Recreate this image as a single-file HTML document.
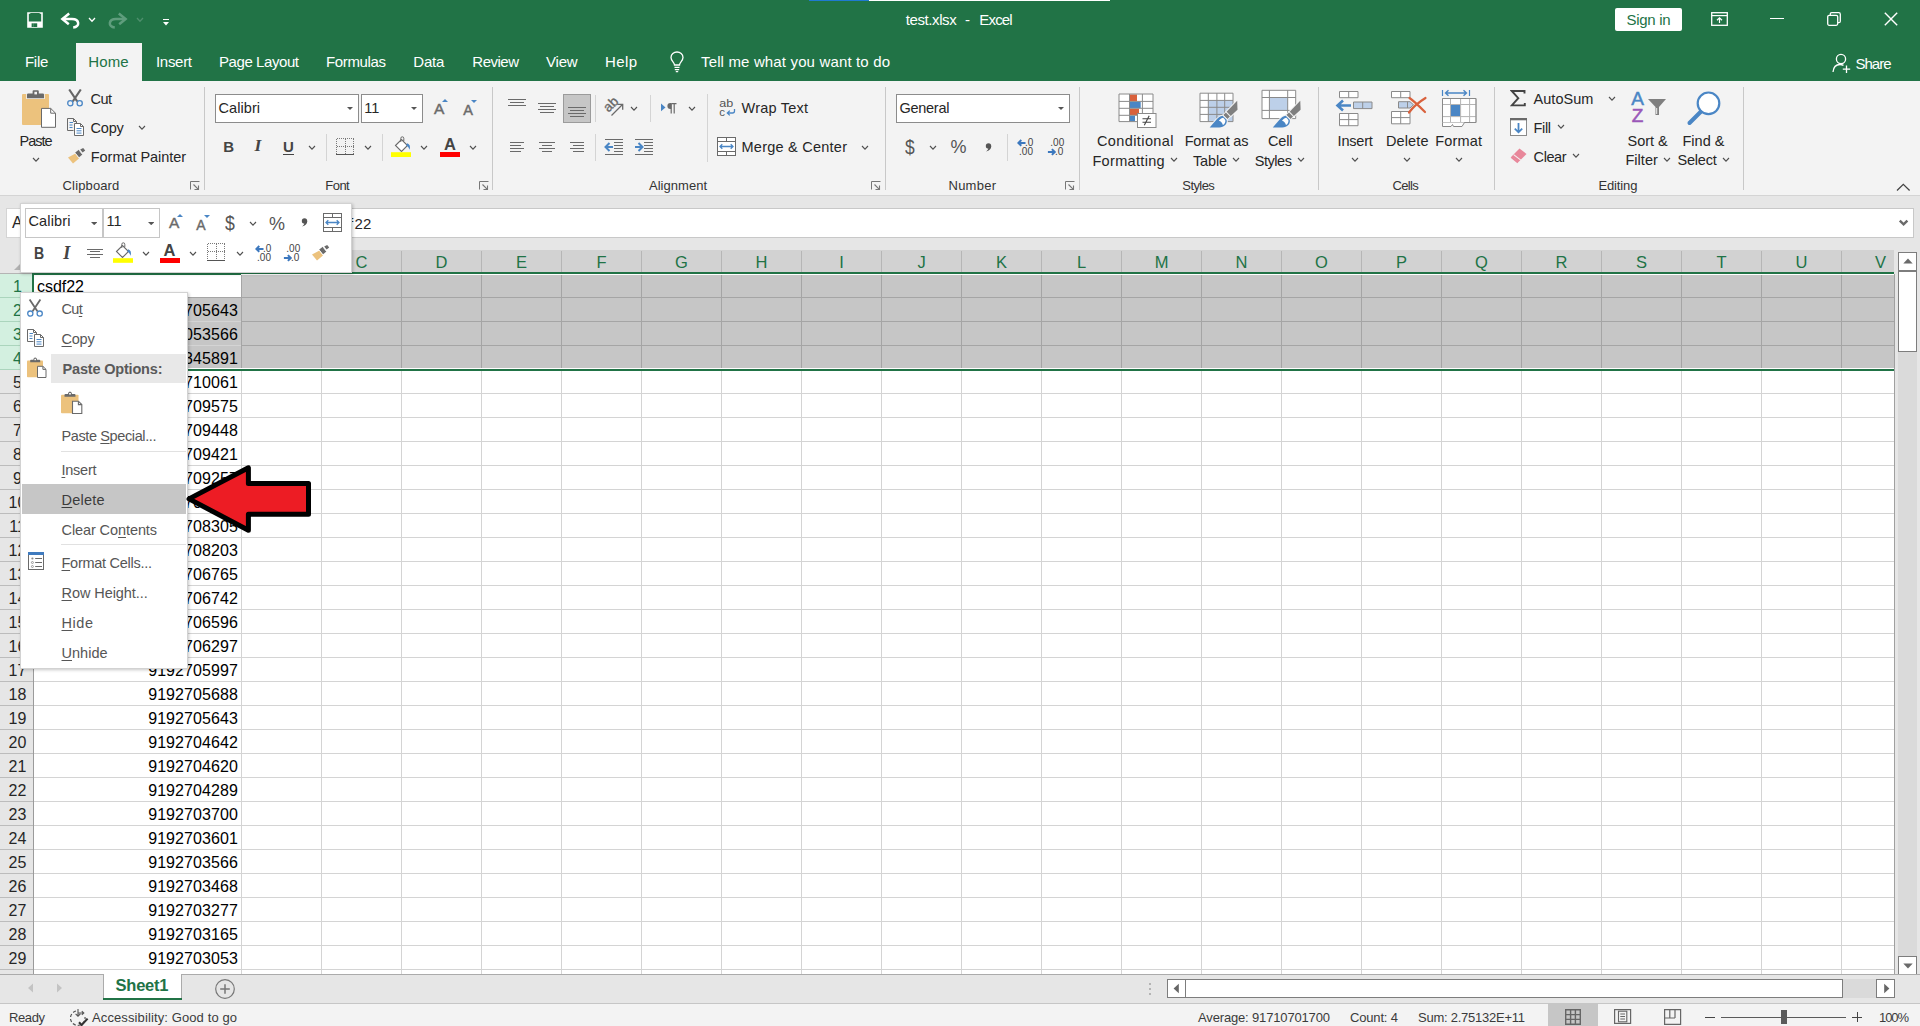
<!DOCTYPE html>
<html><head><meta charset="utf-8"><title>test.xlsx - Excel</title>
<style>
html,body{margin:0;padding:0;}
body{width:1920px;height:1026px;overflow:hidden;position:relative;background:#fff;font-family:"Liberation Sans",sans-serif;}
.r{position:absolute;}
.t{position:absolute;white-space:pre;}
u{text-decoration:underline;text-underline-offset:2px;text-decoration-thickness:1px;}
</style></head><body>
<div class="r" style="left:0px;top:196px;width:1920px;height:78px;background:#e6e6e6;"></div>
<div class="r" style="left:6px;top:208px;width:130px;height:30px;background:#fff;border:1px solid #d4d4d4;box-sizing:border-box;"></div>
<div class="t" style="left:12.00px;top:215.46px;font-size:16px;line-height:16px;color:#262626;">A</div>
<div class="r" style="left:340px;top:208px;width:1574px;height:30px;background:#fff;border:1px solid #c8c8c8;box-sizing:border-box;"></div>
<div class="t" style="left:348.90px;top:216.10px;font-size:15px;line-height:15px;color:#262626;">f</div>
<div class="t" style="left:354.60px;top:216.10px;font-size:15px;line-height:15px;color:#262626;">22</div>
<svg class="r" style="left:1897px;top:218px;" width="14" height="10" viewBox="0 0 14 10"><path d="M2.8 2.6 L6.6 6.4 L10.4 2.6" fill="none" stroke="#6a6a6a" stroke-width="2.4"/></svg>
<div class="r" style="left:0px;top:274px;width:1894px;height:700px;background:#fff;"></div>
<div class="r" style="left:0px;top:250px;width:1894px;height:22px;background:#d2d2d2;"></div>
<div class="r" style="left:0px;top:250px;width:34px;height:24px;background:#e6e6e6;"></div>
<svg class="r" style="left:14px;top:258px;" width="12" height="12" viewBox="0 0 12 12"><path d="M12 0 L12 12 L0 12 Z" fill="#b1b1b1"/></svg>
<div class="r" style="left:34px;top:275px;width:1860px;height:95px;background:#c6c6c6;"></div>
<div class="r" style="left:34px;top:275px;width:207px;height:22px;background:#fff;"></div>
<div class="r" style="left:0px;top:274px;width:33px;height:700px;background:#e6e6e6;"></div>
<div class="r" style="left:0px;top:274px;width:33px;height:96px;background:#d3f0e0;"></div>
<div class="r" style="left:241px;top:274px;width:1px;height:700px;background:#d4d4d4;"></div>
<div class="r" style="left:241px;top:275px;width:1px;height:95px;background:#a5a5a5;"></div>
<div class="r" style="left:241px;top:251px;width:1px;height:21px;background:#b6b6b6;"></div>
<div class="r" style="left:321px;top:274px;width:1px;height:700px;background:#d4d4d4;"></div>
<div class="r" style="left:321px;top:275px;width:1px;height:95px;background:#a5a5a5;"></div>
<div class="r" style="left:321px;top:251px;width:1px;height:21px;background:#b6b6b6;"></div>
<div class="r" style="left:401px;top:274px;width:1px;height:700px;background:#d4d4d4;"></div>
<div class="r" style="left:401px;top:275px;width:1px;height:95px;background:#a5a5a5;"></div>
<div class="r" style="left:401px;top:251px;width:1px;height:21px;background:#b6b6b6;"></div>
<div class="r" style="left:481px;top:274px;width:1px;height:700px;background:#d4d4d4;"></div>
<div class="r" style="left:481px;top:275px;width:1px;height:95px;background:#a5a5a5;"></div>
<div class="r" style="left:481px;top:251px;width:1px;height:21px;background:#b6b6b6;"></div>
<div class="r" style="left:561px;top:274px;width:1px;height:700px;background:#d4d4d4;"></div>
<div class="r" style="left:561px;top:275px;width:1px;height:95px;background:#a5a5a5;"></div>
<div class="r" style="left:561px;top:251px;width:1px;height:21px;background:#b6b6b6;"></div>
<div class="r" style="left:641px;top:274px;width:1px;height:700px;background:#d4d4d4;"></div>
<div class="r" style="left:641px;top:275px;width:1px;height:95px;background:#a5a5a5;"></div>
<div class="r" style="left:641px;top:251px;width:1px;height:21px;background:#b6b6b6;"></div>
<div class="r" style="left:721px;top:274px;width:1px;height:700px;background:#d4d4d4;"></div>
<div class="r" style="left:721px;top:275px;width:1px;height:95px;background:#a5a5a5;"></div>
<div class="r" style="left:721px;top:251px;width:1px;height:21px;background:#b6b6b6;"></div>
<div class="r" style="left:801px;top:274px;width:1px;height:700px;background:#d4d4d4;"></div>
<div class="r" style="left:801px;top:275px;width:1px;height:95px;background:#a5a5a5;"></div>
<div class="r" style="left:801px;top:251px;width:1px;height:21px;background:#b6b6b6;"></div>
<div class="r" style="left:881px;top:274px;width:1px;height:700px;background:#d4d4d4;"></div>
<div class="r" style="left:881px;top:275px;width:1px;height:95px;background:#a5a5a5;"></div>
<div class="r" style="left:881px;top:251px;width:1px;height:21px;background:#b6b6b6;"></div>
<div class="r" style="left:961px;top:274px;width:1px;height:700px;background:#d4d4d4;"></div>
<div class="r" style="left:961px;top:275px;width:1px;height:95px;background:#a5a5a5;"></div>
<div class="r" style="left:961px;top:251px;width:1px;height:21px;background:#b6b6b6;"></div>
<div class="r" style="left:1041px;top:274px;width:1px;height:700px;background:#d4d4d4;"></div>
<div class="r" style="left:1041px;top:275px;width:1px;height:95px;background:#a5a5a5;"></div>
<div class="r" style="left:1041px;top:251px;width:1px;height:21px;background:#b6b6b6;"></div>
<div class="r" style="left:1121px;top:274px;width:1px;height:700px;background:#d4d4d4;"></div>
<div class="r" style="left:1121px;top:275px;width:1px;height:95px;background:#a5a5a5;"></div>
<div class="r" style="left:1121px;top:251px;width:1px;height:21px;background:#b6b6b6;"></div>
<div class="r" style="left:1201px;top:274px;width:1px;height:700px;background:#d4d4d4;"></div>
<div class="r" style="left:1201px;top:275px;width:1px;height:95px;background:#a5a5a5;"></div>
<div class="r" style="left:1201px;top:251px;width:1px;height:21px;background:#b6b6b6;"></div>
<div class="r" style="left:1281px;top:274px;width:1px;height:700px;background:#d4d4d4;"></div>
<div class="r" style="left:1281px;top:275px;width:1px;height:95px;background:#a5a5a5;"></div>
<div class="r" style="left:1281px;top:251px;width:1px;height:21px;background:#b6b6b6;"></div>
<div class="r" style="left:1361px;top:274px;width:1px;height:700px;background:#d4d4d4;"></div>
<div class="r" style="left:1361px;top:275px;width:1px;height:95px;background:#a5a5a5;"></div>
<div class="r" style="left:1361px;top:251px;width:1px;height:21px;background:#b6b6b6;"></div>
<div class="r" style="left:1441px;top:274px;width:1px;height:700px;background:#d4d4d4;"></div>
<div class="r" style="left:1441px;top:275px;width:1px;height:95px;background:#a5a5a5;"></div>
<div class="r" style="left:1441px;top:251px;width:1px;height:21px;background:#b6b6b6;"></div>
<div class="r" style="left:1521px;top:274px;width:1px;height:700px;background:#d4d4d4;"></div>
<div class="r" style="left:1521px;top:275px;width:1px;height:95px;background:#a5a5a5;"></div>
<div class="r" style="left:1521px;top:251px;width:1px;height:21px;background:#b6b6b6;"></div>
<div class="r" style="left:1601px;top:274px;width:1px;height:700px;background:#d4d4d4;"></div>
<div class="r" style="left:1601px;top:275px;width:1px;height:95px;background:#a5a5a5;"></div>
<div class="r" style="left:1601px;top:251px;width:1px;height:21px;background:#b6b6b6;"></div>
<div class="r" style="left:1681px;top:274px;width:1px;height:700px;background:#d4d4d4;"></div>
<div class="r" style="left:1681px;top:275px;width:1px;height:95px;background:#a5a5a5;"></div>
<div class="r" style="left:1681px;top:251px;width:1px;height:21px;background:#b6b6b6;"></div>
<div class="r" style="left:1761px;top:274px;width:1px;height:700px;background:#d4d4d4;"></div>
<div class="r" style="left:1761px;top:275px;width:1px;height:95px;background:#a5a5a5;"></div>
<div class="r" style="left:1761px;top:251px;width:1px;height:21px;background:#b6b6b6;"></div>
<div class="r" style="left:1841px;top:274px;width:1px;height:700px;background:#d4d4d4;"></div>
<div class="r" style="left:1841px;top:275px;width:1px;height:95px;background:#a5a5a5;"></div>
<div class="r" style="left:1841px;top:251px;width:1px;height:21px;background:#b6b6b6;"></div>
<div class="r" style="left:34px;top:297px;width:1860px;height:1px;background:#d4d4d4;"></div>
<div class="r" style="left:0px;top:297px;width:33px;height:1px;background:#abd5bd;"></div>
<div class="r" style="left:34px;top:321px;width:1860px;height:1px;background:#d4d4d4;"></div>
<div class="r" style="left:0px;top:321px;width:33px;height:1px;background:#abd5bd;"></div>
<div class="r" style="left:34px;top:345px;width:1860px;height:1px;background:#d4d4d4;"></div>
<div class="r" style="left:0px;top:345px;width:33px;height:1px;background:#abd5bd;"></div>
<div class="r" style="left:34px;top:369px;width:1860px;height:1px;background:#d4d4d4;"></div>
<div class="r" style="left:0px;top:369px;width:33px;height:1px;background:#abd5bd;"></div>
<div class="r" style="left:34px;top:393px;width:1860px;height:1px;background:#d4d4d4;"></div>
<div class="r" style="left:0px;top:393px;width:33px;height:1px;background:#bcbcbc;"></div>
<div class="r" style="left:34px;top:417px;width:1860px;height:1px;background:#d4d4d4;"></div>
<div class="r" style="left:0px;top:417px;width:33px;height:1px;background:#bcbcbc;"></div>
<div class="r" style="left:34px;top:441px;width:1860px;height:1px;background:#d4d4d4;"></div>
<div class="r" style="left:0px;top:441px;width:33px;height:1px;background:#bcbcbc;"></div>
<div class="r" style="left:34px;top:465px;width:1860px;height:1px;background:#d4d4d4;"></div>
<div class="r" style="left:0px;top:465px;width:33px;height:1px;background:#bcbcbc;"></div>
<div class="r" style="left:34px;top:489px;width:1860px;height:1px;background:#d4d4d4;"></div>
<div class="r" style="left:0px;top:489px;width:33px;height:1px;background:#bcbcbc;"></div>
<div class="r" style="left:34px;top:513px;width:1860px;height:1px;background:#d4d4d4;"></div>
<div class="r" style="left:0px;top:513px;width:33px;height:1px;background:#bcbcbc;"></div>
<div class="r" style="left:34px;top:537px;width:1860px;height:1px;background:#d4d4d4;"></div>
<div class="r" style="left:0px;top:537px;width:33px;height:1px;background:#bcbcbc;"></div>
<div class="r" style="left:34px;top:561px;width:1860px;height:1px;background:#d4d4d4;"></div>
<div class="r" style="left:0px;top:561px;width:33px;height:1px;background:#bcbcbc;"></div>
<div class="r" style="left:34px;top:585px;width:1860px;height:1px;background:#d4d4d4;"></div>
<div class="r" style="left:0px;top:585px;width:33px;height:1px;background:#bcbcbc;"></div>
<div class="r" style="left:34px;top:609px;width:1860px;height:1px;background:#d4d4d4;"></div>
<div class="r" style="left:0px;top:609px;width:33px;height:1px;background:#bcbcbc;"></div>
<div class="r" style="left:34px;top:633px;width:1860px;height:1px;background:#d4d4d4;"></div>
<div class="r" style="left:0px;top:633px;width:33px;height:1px;background:#bcbcbc;"></div>
<div class="r" style="left:34px;top:657px;width:1860px;height:1px;background:#d4d4d4;"></div>
<div class="r" style="left:0px;top:657px;width:33px;height:1px;background:#bcbcbc;"></div>
<div class="r" style="left:34px;top:681px;width:1860px;height:1px;background:#d4d4d4;"></div>
<div class="r" style="left:0px;top:681px;width:33px;height:1px;background:#bcbcbc;"></div>
<div class="r" style="left:34px;top:705px;width:1860px;height:1px;background:#d4d4d4;"></div>
<div class="r" style="left:0px;top:705px;width:33px;height:1px;background:#bcbcbc;"></div>
<div class="r" style="left:34px;top:729px;width:1860px;height:1px;background:#d4d4d4;"></div>
<div class="r" style="left:0px;top:729px;width:33px;height:1px;background:#bcbcbc;"></div>
<div class="r" style="left:34px;top:753px;width:1860px;height:1px;background:#d4d4d4;"></div>
<div class="r" style="left:0px;top:753px;width:33px;height:1px;background:#bcbcbc;"></div>
<div class="r" style="left:34px;top:777px;width:1860px;height:1px;background:#d4d4d4;"></div>
<div class="r" style="left:0px;top:777px;width:33px;height:1px;background:#bcbcbc;"></div>
<div class="r" style="left:34px;top:801px;width:1860px;height:1px;background:#d4d4d4;"></div>
<div class="r" style="left:0px;top:801px;width:33px;height:1px;background:#bcbcbc;"></div>
<div class="r" style="left:34px;top:825px;width:1860px;height:1px;background:#d4d4d4;"></div>
<div class="r" style="left:0px;top:825px;width:33px;height:1px;background:#bcbcbc;"></div>
<div class="r" style="left:34px;top:849px;width:1860px;height:1px;background:#d4d4d4;"></div>
<div class="r" style="left:0px;top:849px;width:33px;height:1px;background:#bcbcbc;"></div>
<div class="r" style="left:34px;top:873px;width:1860px;height:1px;background:#d4d4d4;"></div>
<div class="r" style="left:0px;top:873px;width:33px;height:1px;background:#bcbcbc;"></div>
<div class="r" style="left:34px;top:897px;width:1860px;height:1px;background:#d4d4d4;"></div>
<div class="r" style="left:0px;top:897px;width:33px;height:1px;background:#bcbcbc;"></div>
<div class="r" style="left:34px;top:921px;width:1860px;height:1px;background:#d4d4d4;"></div>
<div class="r" style="left:0px;top:921px;width:33px;height:1px;background:#bcbcbc;"></div>
<div class="r" style="left:34px;top:945px;width:1860px;height:1px;background:#d4d4d4;"></div>
<div class="r" style="left:0px;top:945px;width:33px;height:1px;background:#bcbcbc;"></div>
<div class="r" style="left:34px;top:969px;width:1860px;height:1px;background:#d4d4d4;"></div>
<div class="r" style="left:0px;top:969px;width:33px;height:1px;background:#bcbcbc;"></div>
<div class="r" style="left:241px;top:297px;width:1653px;height:1px;background:#a5a5a5;"></div>
<div class="r" style="left:241px;top:321px;width:1653px;height:1px;background:#a5a5a5;"></div>
<div class="r" style="left:241px;top:345px;width:1653px;height:1px;background:#a5a5a5;"></div>
<div class="r" style="left:34px;top:297px;width:207px;height:1px;background:#a5a5a5;"></div>
<div class="r" style="left:33px;top:274px;width:1px;height:700px;background:#9b9b9b;"></div>
<div class="r" style="left:34px;top:272px;width:1860px;height:2px;background:#217346;"></div>
<div class="r" style="left:34px;top:274px;width:1860px;height:1px;background:#fff;"></div>
<div class="r" style="left:34px;top:368px;width:1860px;height:1px;background:#fff;"></div>
<div class="r" style="left:33px;top:369px;width:1861px;height:2px;background:#217346;"></div>
<div class="r" style="left:32px;top:273px;width:2px;height:97px;background:#217346;"></div>
<div class="r" style="left:0px;top:273px;width:32px;height:1px;background:#b4b4b4;"></div>
<div class="r" style="left:34px;top:274px;width:207px;height:1px;background:#217346;"></div>
<div class="t" style="left:355.54px;top:254.03px;font-size:16.5px;line-height:16.5px;color:#217346;">C</div>
<div class="t" style="left:435.54px;top:254.03px;font-size:16.5px;line-height:16.5px;color:#217346;">D</div>
<div class="t" style="left:516.00px;top:254.03px;font-size:16.5px;line-height:16.5px;color:#217346;">E</div>
<div class="t" style="left:596.46px;top:254.03px;font-size:16.5px;line-height:16.5px;color:#217346;">F</div>
<div class="t" style="left:675.08px;top:254.03px;font-size:16.5px;line-height:16.5px;color:#217346;">G</div>
<div class="t" style="left:755.54px;top:254.03px;font-size:16.5px;line-height:16.5px;color:#217346;">H</div>
<div class="t" style="left:839.21px;top:254.03px;font-size:16.5px;line-height:16.5px;color:#217346;">I</div>
<div class="t" style="left:917.38px;top:254.03px;font-size:16.5px;line-height:16.5px;color:#217346;">J</div>
<div class="t" style="left:996.00px;top:254.03px;font-size:16.5px;line-height:16.5px;color:#217346;">K</div>
<div class="t" style="left:1076.91px;top:254.03px;font-size:16.5px;line-height:16.5px;color:#217346;">L</div>
<div class="t" style="left:1154.63px;top:254.03px;font-size:16.5px;line-height:16.5px;color:#217346;">M</div>
<div class="t" style="left:1235.54px;top:254.03px;font-size:16.5px;line-height:16.5px;color:#217346;">N</div>
<div class="t" style="left:1315.08px;top:254.03px;font-size:16.5px;line-height:16.5px;color:#217346;">O</div>
<div class="t" style="left:1396.00px;top:254.03px;font-size:16.5px;line-height:16.5px;color:#217346;">P</div>
<div class="t" style="left:1475.08px;top:254.03px;font-size:16.5px;line-height:16.5px;color:#217346;">Q</div>
<div class="t" style="left:1555.54px;top:254.03px;font-size:16.5px;line-height:16.5px;color:#217346;">R</div>
<div class="t" style="left:1636.00px;top:254.03px;font-size:16.5px;line-height:16.5px;color:#217346;">S</div>
<div class="t" style="left:1716.46px;top:254.03px;font-size:16.5px;line-height:16.5px;color:#217346;">T</div>
<div class="t" style="left:1795.54px;top:254.03px;font-size:16.5px;line-height:16.5px;color:#217346;">U</div>
<div class="t" style="left:1875.00px;top:254.03px;font-size:16.5px;line-height:16.5px;color:#217346;">V</div>
<div class="t" style="left:13.05px;top:278.96px;font-size:16px;line-height:16px;color:#217346;">1</div>
<div class="t" style="left:13.05px;top:302.96px;font-size:16px;line-height:16px;color:#217346;">2</div>
<div class="t" style="left:13.05px;top:326.96px;font-size:16px;line-height:16px;color:#217346;">3</div>
<div class="t" style="left:13.05px;top:350.96px;font-size:16px;line-height:16px;color:#217346;">4</div>
<div class="t" style="left:13.05px;top:374.96px;font-size:16px;line-height:16px;color:#262626;">5</div>
<div class="t" style="left:13.05px;top:398.96px;font-size:16px;line-height:16px;color:#262626;">6</div>
<div class="t" style="left:13.05px;top:422.96px;font-size:16px;line-height:16px;color:#262626;">7</div>
<div class="t" style="left:13.05px;top:446.96px;font-size:16px;line-height:16px;color:#262626;">8</div>
<div class="t" style="left:13.05px;top:470.96px;font-size:16px;line-height:16px;color:#262626;">9</div>
<div class="t" style="left:8.60px;top:494.96px;font-size:16px;line-height:16px;color:#262626;">10</div>
<div class="t" style="left:9.20px;top:518.96px;font-size:16px;line-height:16px;color:#262626;">11</div>
<div class="t" style="left:8.60px;top:542.96px;font-size:16px;line-height:16px;color:#262626;">12</div>
<div class="t" style="left:8.60px;top:566.96px;font-size:16px;line-height:16px;color:#262626;">13</div>
<div class="t" style="left:8.60px;top:590.96px;font-size:16px;line-height:16px;color:#262626;">14</div>
<div class="t" style="left:8.60px;top:614.96px;font-size:16px;line-height:16px;color:#262626;">15</div>
<div class="t" style="left:8.60px;top:638.96px;font-size:16px;line-height:16px;color:#262626;">16</div>
<div class="t" style="left:8.60px;top:662.96px;font-size:16px;line-height:16px;color:#262626;">17</div>
<div class="t" style="left:8.60px;top:686.96px;font-size:16px;line-height:16px;color:#262626;">18</div>
<div class="t" style="left:8.60px;top:710.96px;font-size:16px;line-height:16px;color:#262626;">19</div>
<div class="t" style="left:8.60px;top:734.96px;font-size:16px;line-height:16px;color:#262626;">20</div>
<div class="t" style="left:8.60px;top:758.96px;font-size:16px;line-height:16px;color:#262626;">21</div>
<div class="t" style="left:8.60px;top:782.96px;font-size:16px;line-height:16px;color:#262626;">22</div>
<div class="t" style="left:8.60px;top:806.96px;font-size:16px;line-height:16px;color:#262626;">23</div>
<div class="t" style="left:8.60px;top:830.96px;font-size:16px;line-height:16px;color:#262626;">24</div>
<div class="t" style="left:8.60px;top:854.96px;font-size:16px;line-height:16px;color:#262626;">25</div>
<div class="t" style="left:8.60px;top:878.96px;font-size:16px;line-height:16px;color:#262626;">26</div>
<div class="t" style="left:8.60px;top:902.96px;font-size:16px;line-height:16px;color:#262626;">27</div>
<div class="t" style="left:8.60px;top:926.96px;font-size:16px;line-height:16px;color:#262626;">28</div>
<div class="t" style="left:8.60px;top:950.96px;font-size:16px;line-height:16px;color:#262626;">29</div>
<div class="t" style="left:37.00px;top:278.96px;font-size:16px;line-height:16px;color:#000;letter-spacing:-0.028px;">csdf22</div>
<div class="t" style="left:148.20px;top:302.96px;font-size:16px;line-height:16px;color:#000;letter-spacing:0.068px;">9192705643</div>
<div class="t" style="left:148.20px;top:326.96px;font-size:16px;line-height:16px;color:#000;letter-spacing:0.068px;">9193053566</div>
<div class="t" style="left:148.20px;top:350.96px;font-size:16px;line-height:16px;color:#000;letter-spacing:0.068px;">9192345891</div>
<div class="t" style="left:148.20px;top:374.96px;font-size:16px;line-height:16px;color:#000;letter-spacing:0.068px;">9192710061</div>
<div class="t" style="left:148.20px;top:398.96px;font-size:16px;line-height:16px;color:#000;letter-spacing:0.068px;">9192709575</div>
<div class="t" style="left:148.20px;top:422.96px;font-size:16px;line-height:16px;color:#000;letter-spacing:0.068px;">9192709448</div>
<div class="t" style="left:148.20px;top:446.96px;font-size:16px;line-height:16px;color:#000;letter-spacing:0.068px;">9192709421</div>
<div class="t" style="left:148.20px;top:470.96px;font-size:16px;line-height:16px;color:#000;letter-spacing:0.068px;">9192709257</div>
<div class="t" style="left:148.20px;top:494.96px;font-size:16px;line-height:16px;color:#000;letter-spacing:0.068px;">9192708742</div>
<div class="t" style="left:148.20px;top:518.96px;font-size:16px;line-height:16px;color:#000;letter-spacing:0.068px;">9192708305</div>
<div class="t" style="left:148.20px;top:542.96px;font-size:16px;line-height:16px;color:#000;letter-spacing:0.068px;">9192708203</div>
<div class="t" style="left:148.20px;top:566.96px;font-size:16px;line-height:16px;color:#000;letter-spacing:0.068px;">9192706765</div>
<div class="t" style="left:148.20px;top:590.96px;font-size:16px;line-height:16px;color:#000;letter-spacing:0.068px;">9192706742</div>
<div class="t" style="left:148.20px;top:614.96px;font-size:16px;line-height:16px;color:#000;letter-spacing:0.068px;">9192706596</div>
<div class="t" style="left:148.20px;top:638.96px;font-size:16px;line-height:16px;color:#000;letter-spacing:0.068px;">9192706297</div>
<div class="t" style="left:148.20px;top:662.96px;font-size:16px;line-height:16px;color:#000;letter-spacing:0.068px;">9192705997</div>
<div class="t" style="left:148.20px;top:686.96px;font-size:16px;line-height:16px;color:#000;letter-spacing:0.068px;">9192705688</div>
<div class="t" style="left:148.20px;top:710.96px;font-size:16px;line-height:16px;color:#000;letter-spacing:0.068px;">9192705643</div>
<div class="t" style="left:148.20px;top:734.96px;font-size:16px;line-height:16px;color:#000;letter-spacing:0.068px;">9192704642</div>
<div class="t" style="left:148.20px;top:758.96px;font-size:16px;line-height:16px;color:#000;letter-spacing:0.068px;">9192704620</div>
<div class="t" style="left:148.20px;top:782.96px;font-size:16px;line-height:16px;color:#000;letter-spacing:0.068px;">9192704289</div>
<div class="t" style="left:148.20px;top:806.96px;font-size:16px;line-height:16px;color:#000;letter-spacing:0.068px;">9192703700</div>
<div class="t" style="left:148.20px;top:830.96px;font-size:16px;line-height:16px;color:#000;letter-spacing:0.068px;">9192703601</div>
<div class="t" style="left:148.20px;top:854.96px;font-size:16px;line-height:16px;color:#000;letter-spacing:0.068px;">9192703566</div>
<div class="t" style="left:148.20px;top:878.96px;font-size:16px;line-height:16px;color:#000;letter-spacing:0.068px;">9192703468</div>
<div class="t" style="left:148.20px;top:902.96px;font-size:16px;line-height:16px;color:#000;letter-spacing:0.068px;">9192703277</div>
<div class="t" style="left:148.20px;top:926.96px;font-size:16px;line-height:16px;color:#000;letter-spacing:0.068px;">9192703165</div>
<div class="t" style="left:148.20px;top:950.96px;font-size:16px;line-height:16px;color:#000;letter-spacing:0.068px;">9192703053</div>
<div class="r" style="left:1894px;top:250px;width:26px;height:725px;background:#e6e6e6;"></div>
<div class="r" style="left:1898px;top:271px;width:19px;height:686px;background:#dadada;"></div>
<div class="r" style="left:1898px;top:252px;width:19px;height:19px;background:#fff;border:1px solid #7d7d7d;box-sizing:border-box;"></div>
<svg class="r" style="left:1903px;top:257px;" width="10" height="8" viewBox="0 0 10 8"><path d="M0.3 6.6 L5 1.4 L9.7 6.6 Z" fill="#6a6a6a"/></svg>
<div class="r" style="left:1898px;top:271px;width:19px;height:81px;background:#fff;border:1px solid #7d7d7d;box-sizing:border-box;"></div>
<div class="r" style="left:1898px;top:956px;width:19px;height:19px;background:#fff;border:1px solid #7d7d7d;box-sizing:border-box;"></div>
<svg class="r" style="left:1903px;top:962px;" width="10" height="8" viewBox="0 0 10 8"><path d="M0.3 1.4 L5 6.6 L9.7 1.4 Z" fill="#6a6a6a"/></svg>
<div class="r" style="left:1894px;top:274px;width:1px;height:700px;background:#a0a0a0;"></div>
<div class="r" style="left:0px;top:974px;width:1920px;height:30px;background:#e6e6e6;"></div>
<div class="r" style="left:0px;top:974px;width:1920px;height:1px;background:#ababab;"></div>
<svg class="r" style="left:26px;top:982px;" width="10" height="12" viewBox="0 0 10 12"><path d="M7 1.5 L2 6 L7 10.5 Z" fill="#c3c3c3"/></svg>
<svg class="r" style="left:54px;top:982px;" width="10" height="12" viewBox="0 0 10 12"><path d="M3 1.5 L8 6 L3 10.5 Z" fill="#c3c3c3"/></svg>
<div class="r" style="left:103px;top:974px;width:79px;height:25px;background:#fff;"></div>
<div class="r" style="left:103px;top:974px;width:1px;height:26px;background:#ababab;"></div>
<div class="r" style="left:181px;top:974px;width:1px;height:26px;background:#ababab;"></div>
<div class="r" style="left:103px;top:998px;width:79px;height:2px;background:#217346;"></div>
<div class="t" style="left:115.50px;top:977.03px;font-size:16.5px;line-height:16.5px;color:#217346;letter-spacing:-0.222px;font-weight:700;">Sheet1</div>
<svg class="r" style="left:214px;top:978px;" width="22" height="22" viewBox="0 0 22 22"><circle cx="11" cy="11" r="9.3" fill="none" stroke="#777" stroke-width="1.2"/><path d="M11 6.2 V15.8 M6.2 11 H15.8" stroke="#777" stroke-width="1.5"/></svg>
<div class="r" style="left:1149px;top:983px;width:2px;height:2px;background:#b4b4b4;"></div>
<div class="r" style="left:1149px;top:988px;width:2px;height:2px;background:#b4b4b4;"></div>
<div class="r" style="left:1149px;top:993px;width:2px;height:2px;background:#b4b4b4;"></div>
<div class="r" style="left:1167px;top:979px;width:19px;height:19px;background:#fff;border:1px solid #7d7d7d;box-sizing:border-box;"></div>
<svg class="r" style="left:1172px;top:983px;" width="8" height="11" viewBox="0 0 8 11"><path d="M6.8 0.8 L1.6 5.5 L6.8 10.2 Z" fill="#666"/></svg>
<div class="r" style="left:1843px;top:979px;width:33px;height:19px;background:#dadada;"></div>
<div class="r" style="left:1185px;top:979px;width:658px;height:19px;background:#fff;border:1px solid #7d7d7d;box-sizing:border-box;"></div>
<div class="r" style="left:1876px;top:979px;width:19px;height:19px;background:#fff;border:1px solid #7d7d7d;box-sizing:border-box;"></div>
<svg class="r" style="left:1883px;top:983px;" width="8" height="11" viewBox="0 0 8 11"><path d="M1.2 0.8 L6.4 5.5 L1.2 10.2 Z" fill="#666"/></svg>
<div class="r" style="left:0px;top:1004px;width:1920px;height:22px;background:#f3f3f3;"></div>
<div class="r" style="left:0px;top:1003px;width:1920px;height:1px;background:#c6c6c6;"></div>
<div class="t" style="left:9.00px;top:1011.00px;font-size:13px;line-height:13px;color:#3b3b3b;letter-spacing:-0.395px;">Ready</div>
<div class="t" style="left:92.00px;top:1011.00px;font-size:13px;line-height:13px;color:#3b3b3b;letter-spacing:0.111px;">Accessibility: Good to go</div>
<svg class="r" style="left:68px;top:1008px;" width="22" height="18" viewBox="0 0 22 18"><path d="M8 3 A7.3 7.3 0 1 0 17 9" fill="none" stroke="#555" stroke-width="1.2" stroke-dasharray="3.2 2"/><path d="M10 1 V8 M7.6 5.8 L10 8.2 L12.4 5.8 M10 5 H15.5 M13.8 3.2 L15.8 5 L13.8 6.8" fill="none" stroke="#555" stroke-width="1.1"/><path d="M11 14.2 L13.6 17 L19.6 10.6" fill="none" stroke="#333" stroke-width="2.1"/></svg>
<div class="t" style="left:1198.00px;top:1011.00px;font-size:13px;line-height:13px;color:#3b3b3b;letter-spacing:-0.155px;">Average: 91710701700</div>
<div class="t" style="left:1350.00px;top:1011.00px;font-size:13px;line-height:13px;color:#3b3b3b;letter-spacing:-0.163px;">Count: 4</div>
<div class="t" style="left:1418.00px;top:1011.00px;font-size:13px;line-height:13px;color:#3b3b3b;letter-spacing:-0.247px;">Sum: 2.75132E+11</div>
<div class="r" style="left:1548px;top:1004px;width:50px;height:22px;background:#c6c6c6;"></div>
<svg class="r" style="left:1565px;top:1009px;" width="16" height="16" viewBox="0 0 16 16"><path d="M0.7 0.7 H15.3 V15.3 H0.7 Z M5.6 0.7 V15.3 M10.4 0.7 V15.3 M0.7 5.6 H15.3 M0.7 10.4 H15.3" fill="none" stroke="#666" stroke-width="1.4"/></svg>
<svg class="r" style="left:1614px;top:1009px;" width="18" height="15" viewBox="0 0 18 15"><rect x="0.6" y="0.6" width="16" height="13.8" fill="none" stroke="#666" stroke-width="1.2"/><rect x="4.5" y="2.2" width="8.3" height="10.6" fill="none" stroke="#666" stroke-width="1.1"/><path d="M6.3 5 H11 M6.3 7.5 H11 M6.3 10 H11" stroke="#666" stroke-width="1"/></svg>
<svg class="r" style="left:1664px;top:1009px;" width="18" height="16" viewBox="0 0 18 16"><path d="M0.6 0.6 H16.6 V15.4 H0.6 Z M5.8 0.6 V9 M11 0.6 V9 M0.6 9 H11" fill="none" stroke="#666" stroke-width="1.2"/></svg>
<div class="r" style="left:1705px;top:1017px;width:10px;height:1px;background:#444;"></div>
<div class="r" style="left:1721px;top:1017px;width:125px;height:1px;background:#5a5a5a;"></div>
<div class="r" style="left:1781px;top:1010px;width:6px;height:14px;background:#5a5a5a;"></div>
<div class="r" style="left:1852px;top:1017px;width:10px;height:1px;background:#444;"></div>
<div class="r" style="left:1856.5px;top:1012px;width:1px;height:10px;background:#444;"></div>
<div class="t" style="left:1879.00px;top:1011.00px;font-size:13px;line-height:13px;color:#3b3b3b;letter-spacing:-1.083px;">100%</div>
<div class="r" style="left:0px;top:0px;width:1920px;height:81px;background:#217346;"></div>
<div class="r" style="left:809px;top:0px;width:60px;height:1px;background:#1f7ad1;"></div>
<div class="r" style="left:869px;top:0px;width:241px;height:1px;background:#fff;"></div>
<svg class="r" style="left:27px;top:12px;" width="16" height="16" viewBox="0 0 16 16"><path d="M1 1 H15 V15 H1 Z" fill="none" stroke="#fff" stroke-width="1.6"/><rect x="3" y="2" width="10" height="6" fill="none" stroke="#fff" stroke-width="0"/><rect x="1" y="9.5" width="14" height="5.5" fill="#fff"/><rect x="3.3" y="1" width="9.4" height="6.2" fill="#217346" stroke="#fff" stroke-width="0"/><rect x="4.6" y="11.3" width="2.2" height="3.7" fill="#217346"/><rect x="8.2" y="11.3" width="2.2" height="3.7" fill="#fff"/><rect x="6.8" y="11.3" width="3.4" height="3.7" fill="#217346"/></svg>
<svg class="r" style="left:60px;top:12px;" width="20" height="17" viewBox="0 0 20 17"><path d="M9.2 1.6 L2.4 7 L8.8 12.2" fill="none" stroke="#fff" stroke-width="2.5" stroke-linejoin="miter"/><path d="M3 7 H12 C19.5 7 20.5 14.8 13.2 15.6" fill="none" stroke="#fff" stroke-width="2.5"/></svg>
<svg class="r" style="left:88px;top:17px;" width="8" height="5.7" viewBox="0 0 8 5.7"><path d="M1 1 L4.0 4.2 L7 1" fill="none" stroke="#fff" stroke-width="1.3"/></svg>
<svg class="r" style="left:108px;top:12px;" width="20" height="17" viewBox="0 0 20 17"><path d="M10.8 1.6 L17.6 7 L11.2 12.2" fill="none" stroke="#5f9d7d" stroke-width="2.5"/><path d="M17 7 H8 C0.5 7 -0.5 14.8 6.8 15.6" fill="none" stroke="#5f9d7d" stroke-width="2.5"/></svg>
<svg class="r" style="left:136px;top:17px;" width="8" height="5.7" viewBox="0 0 8 5.7"><path d="M1 1 L4.0 4.2 L7 1" fill="none" stroke="#4e8f6d" stroke-width="1.3"/></svg>
<div class="r" style="left:163px;top:19px;width:6px;height:1px;background:#fff;"></div>
<svg class="r" style="left:163px;top:22px;" width="6" height="3.5" viewBox="0 0 6 3.5"><path d="M0 0 H6 L3 3.5 Z" fill="#fff"/></svg>
<div class="t" style="left:905.70px;top:12.30px;font-size:15px;line-height:15px;color:#fff;letter-spacing:-0.397px;">test.xlsx</div>
<div class="t" style="left:965.00px;top:12.30px;font-size:15px;line-height:15px;color:#fff;">-</div>
<div class="t" style="left:979.30px;top:12.30px;font-size:15px;line-height:15px;color:#fff;letter-spacing:-0.820px;">Excel</div>
<div class="r" style="left:1615px;top:8px;width:67px;height:23px;background:#fff;border-radius:2px;"></div>
<div class="t" style="left:1626.40px;top:12.30px;font-size:15px;line-height:15px;color:#217346;letter-spacing:-0.261px;">Sign in</div>
<svg class="r" style="left:1711px;top:12px;" width="17" height="14" viewBox="0 0 17 14"><rect x="0.7" y="0.7" width="15.6" height="12.6" fill="none" stroke="#fff" stroke-width="1.3"/><path d="M0.7 3.6 H16.3" stroke="#fff" stroke-width="1.2"/><path d="M8.5 11 V6 M6 8.2 L8.5 5.8 L11 8.2" fill="none" stroke="#fff" stroke-width="1.2"/></svg>
<div class="r" style="left:1770px;top:18px;width:14px;height:1.3px;background:#fff;"></div>
<svg class="r" style="left:1827px;top:12px;" width="14" height="14" viewBox="0 0 14 14"><rect x="0.7" y="3.3" width="10" height="10" rx="1.5" fill="none" stroke="#fff" stroke-width="1.3"/><path d="M3.3 3 V2.2 Q3.3 0.7 4.8 0.7 H11.8 Q13.3 0.7 13.3 2.2 V9.2 Q13.3 10.7 11.8 10.7 H11" fill="none" stroke="#fff" stroke-width="1.3"/></svg>
<svg class="r" style="left:1884px;top:12px;" width="14" height="14" viewBox="0 0 14 14"><path d="M0.8 0.8 L13.2 13.2 M13.2 0.8 L0.8 13.2" stroke="#fff" stroke-width="1.4"/></svg>
<div class="r" style="left:76px;top:43px;width:66px;height:38px;background:#f3f3f3;"></div>
<div class="t" style="left:25.00px;top:53.80px;font-size:15px;line-height:15px;color:#fff;letter-spacing:-0.290px;">File</div>
<div class="t" style="left:156.00px;top:53.80px;font-size:15px;line-height:15px;color:#fff;letter-spacing:-0.303px;">Insert</div>
<div class="t" style="left:219.00px;top:53.80px;font-size:15px;line-height:15px;color:#fff;letter-spacing:-0.424px;">Page Layout</div>
<div class="t" style="left:326.00px;top:53.80px;font-size:15px;line-height:15px;color:#fff;letter-spacing:-0.359px;">Formulas</div>
<div class="t" style="left:413.30px;top:53.80px;font-size:15px;line-height:15px;color:#fff;letter-spacing:-0.228px;">Data</div>
<div class="t" style="left:472.30px;top:53.80px;font-size:15px;line-height:15px;color:#fff;letter-spacing:-0.496px;">Review</div>
<div class="t" style="left:546.00px;top:53.80px;font-size:15px;line-height:15px;color:#fff;letter-spacing:-0.181px;">View</div>
<div class="t" style="left:605.00px;top:53.80px;font-size:15px;line-height:15px;color:#fff;letter-spacing:0.383px;">Help</div>
<div class="t" style="left:88.30px;top:53.80px;font-size:15px;line-height:15px;color:#217346;letter-spacing:0.129px;">Home</div>
<svg class="r" style="left:669px;top:51px;" width="17" height="22" viewBox="0 0 17 22"><path d="M5.5 14 C5.5 11.5 2 10 2 6.5 C2 3.3 4.8 1 8 1 C11.2 1 14 3.3 14 6.5 C14 10 10.5 11.5 10.5 14 Z" fill="none" stroke="#fff" stroke-width="1.3"/><path d="M5.5 16.3 H10.5 M5.8 18.6 H10.2 M6.8 20.6 H9.2" stroke="#fff" stroke-width="1.2"/></svg>
<div class="t" style="left:701.00px;top:53.80px;font-size:15px;line-height:15px;color:#fff;letter-spacing:0.150px;">Tell me what you want to do</div>
<svg class="r" style="left:1832px;top:53px;" width="20" height="21" viewBox="0 0 20 21"><circle cx="9" cy="6" r="4.6" fill="none" stroke="#fff" stroke-width="1.3"/><path d="M1 19 C1.5 13.5 4.5 11.5 8 11.5 C9.5 11.5 10.5 11.8 11.5 12.3" fill="none" stroke="#fff" stroke-width="1.3"/><path d="M14.5 12.5 V20 M10.8 16.2 H18.2" stroke="#fff" stroke-width="1.3"/></svg>
<div class="t" style="left:1855.40px;top:56.00px;font-size:15px;line-height:15px;color:#fff;letter-spacing:-0.932px;">Share</div>
<div class="r" style="left:0px;top:81px;width:1920px;height:114px;background:#f3f3f3;"></div>
<div class="r" style="left:0px;top:195px;width:1920px;height:1px;background:#d4d4d4;"></div>
<svg class="r" style="left:22px;top:88px;" width="36" height="41" viewBox="0 0 36 41"><rect x="0" y="6" width="27" height="31" rx="1" fill="#ecc27d"/><path d="M4.2 10.9 V6.4 Q4.2 4.7 5.9 4.7 H9.9 V3.2 Q9.9 1.5 11.6 1.5 H15.8 Q17.5 1.5 17.5 3.2 V4.7 H21.1 Q22.8 4.7 22.8 6.4 V10.9 Z" fill="#f3f3f3"/><path d="M5 10.2 V6.6 Q5 5.5 6.1 5.5 H10.6 V3.2 Q10.6 2.2 11.6 2.2 H15.8 Q16.8 2.2 16.8 3.2 V5.5 H20.9 Q22 5.5 22 6.6 V10.2 Z" fill="#6a6a6a"/><rect x="12.4" y="3.8" width="2.6" height="2.6" fill="#f3f3f3"/><path d="M19.5 20.4 H28.7 L33.5 25.2 V39.3 H19.5 Z" fill="#fff" stroke="#6a6a6a" stroke-width="1"/><path d="M28.7 20.4 V25.2 H33.5" fill="none" stroke="#6a6a6a" stroke-width="1"/></svg>
<div class="t" style="left:19.50px;top:133.73px;font-size:14.5px;line-height:14.5px;color:#262626;letter-spacing:-1.020px;">Paste</div>
<svg class="r" style="left:32px;top:157px;" width="8" height="5.7" viewBox="0 0 8 5.7"><path d="M1 1 L4.0 4.2 L7 1" fill="none" stroke="#505050" stroke-width="1.15"/></svg>
<svg class="r" style="left:66px;top:89px;" width="18" height="18" viewBox="0 0 18 18"><path d="M3.2 0.5 L11.2 12.3 M14.8 0.5 L6.8 12.3" stroke="#666" stroke-width="2.1" fill="none"/><circle cx="4.3" cy="14.3" r="2.6" fill="none" stroke="#4a86c5" stroke-width="1.3"/><circle cx="13.7" cy="14.3" r="2.6" fill="none" stroke="#4a86c5" stroke-width="1.3"/></svg>
<div class="t" style="left:90.40px;top:91.73px;font-size:14.5px;line-height:14.5px;color:#262626;letter-spacing:-0.482px;">Cut</div>
<svg class="r" style="left:67px;top:118px;" width="18" height="18" viewBox="0 0 18 18"><path d="M0.5 0.5 H6.5 L9.5 3.5 V6 M6.5 0.5 V3.5 H9.5 M0.5 0.5 V12.5 H6.5" fill="none" stroke="#6a6a6a" stroke-width="1"/><path d="M2.5 4.5 H6 M2.5 7 H5.5 M2.5 9.5 H5.5" stroke="#4a86c5" stroke-width="1"/><path d="M7.5 5.5 H13.5 L16.5 8.5 V17.5 H7.5 Z" fill="#fff" stroke="#6a6a6a" stroke-width="1"/><path d="M13.5 5.5 V8.5 H16.5" fill="none" stroke="#6a6a6a" stroke-width="1"/><path d="M9.5 10.5 H14.5 M9.5 12.8 H14.5 M9.5 15.1 H14.5" stroke="#4a86c5" stroke-width="1"/></svg>
<div class="t" style="left:90.40px;top:120.73px;font-size:14.5px;line-height:14.5px;color:#262626;letter-spacing:-0.150px;">Copy</div>
<svg class="r" style="left:138px;top:125px;" width="8" height="5.7" viewBox="0 0 8 5.7"><path d="M1 1 L4.0 4.2 L7 1" fill="none" stroke="#505050" stroke-width="1.15"/></svg>
<svg class="r" style="left:67px;top:148px;" width="19" height="16" viewBox="0 0 19 16"><path d="M1 9.5 L8.5 5.5 L12 10.5 L6 15.5 Z" fill="#ecc27d"/><path d="M8.2 4.6 L11.8 1.8 L15.3 6.5 L11.9 9.4 Z" fill="#6a6a6a"/><path d="M13.2 1.6 L16.2 0 L18.2 2.6 L15.6 4.6 Z" fill="#6a6a6a"/><path d="M8.3 5.3 L12.2 10.1" stroke="#f3f3f3" stroke-width="0.9"/><path d="M12.3 2.3 L15 5.9" stroke="#f3f3f3" stroke-width="0.7"/></svg>
<div class="t" style="left:90.80px;top:149.73px;font-size:14.5px;line-height:14.5px;color:#262626;letter-spacing:-0.053px;">Format Painter</div>
<div class="t" style="left:62.60px;top:178.70px;font-size:13px;line-height:13px;color:#333;letter-spacing:0.132px;">Clipboard</div>
<svg class="r" style="left:190px;top:181px;" width="10" height="9" viewBox="0 0 10 9"><path d="M0.5 8.5 V0.5 H9.5" fill="none" stroke="#777" stroke-width="1"/><path d="M3.5 3.5 L8.3 8.3 M8.5 4.5 V8.5 H4.5" fill="none" stroke="#777" stroke-width="1.1"/></svg>
<div class="r" style="left:204px;top:87px;width:1px;height:103px;background:#c8c8c8;"></div>
<div class="r" style="left:215px;top:94px;width:144px;height:29px;background:#fff;border:1px solid #8c8c8c;box-sizing:border-box;"></div>
<div class="t" style="left:218.50px;top:101.48px;font-size:14.5px;line-height:14.5px;color:#262626;letter-spacing:0.068px;">Calibri</div>
<svg class="r" style="left:347px;top:107px;" width="6" height="3" viewBox="0 0 6 3"><path d="M0 0 H6 L3.0 3 Z" fill="#555"/></svg>
<div class="r" style="left:361px;top:94px;width:62px;height:29px;background:#fff;border:1px solid #8c8c8c;box-sizing:border-box;"></div>
<div class="t" style="left:364.30px;top:101.48px;font-size:14.5px;line-height:14.5px;color:#262626;">11</div>
<svg class="r" style="left:411px;top:107px;" width="6" height="3" viewBox="0 0 6 3"><path d="M0 0 H6 L3.0 3 Z" fill="#555"/></svg>
<div class="t" style="left:434.00px;top:101.18px;font-size:15.5px;line-height:15.5px;color:#6a6a6a;-webkit-text-stroke:0.45px #6a6a6a;">A</div>
<svg class="r" style="left:442px;top:99px;" width="6" height="3" viewBox="0 0 6 3"><path d="M0 3 L3 0 L6 3 Z" fill="#4a86c5"/></svg>
<div class="t" style="left:463.30px;top:102.73px;font-size:14.5px;line-height:14.5px;color:#6a6a6a;-webkit-text-stroke:0.45px #6a6a6a;">A</div>
<svg class="r" style="left:471px;top:99.6px;" width="6" height="3" viewBox="0 0 6 3"><path d="M0 0 H6 L3 3 Z" fill="#4a86c5"/></svg>
<div class="t" style="left:223.30px;top:139.30px;font-size:15px;line-height:15px;color:#444;font-weight:700;">B</div>
<div class="t" style="left:254.60px;top:137.39px;font-size:17.5px;line-height:17.5px;color:#444;font-weight:700;font-style:italic;font-family:'Liberation Serif',serif;">I</div>
<div class="t" style="left:283.00px;top:139.30px;font-size:15px;line-height:15px;color:#444;font-weight:700;">U</div>
<div class="r" style="left:283px;top:154px;width:11px;height:1.2px;background:#444;"></div>
<svg class="r" style="left:308px;top:145px;" width="8" height="5.7" viewBox="0 0 8 5.7"><path d="M1 1 L4.0 4.2 L7 1" fill="none" stroke="#505050" stroke-width="1.15"/></svg>
<div class="r" style="left:326px;top:134px;width:1px;height:27px;background:#d4d4d4;"></div>
<svg class="r" style="left:336px;top:138px;" width="18" height="17" viewBox="0 0 18 17"><g shape-rendering="crispEdges"><path d="M0.5 0.5 H18 M0.5 8.5 H18 M0.5 0.5 V16 M9.5 0.5 V16 M17.5 0.5 V16" stroke="#7a7a7a" stroke-width="1" stroke-dasharray="1 1" fill="none"/><path d="M0 16.5 H18" stroke="#555" stroke-width="1"/></g></svg>
<svg class="r" style="left:364px;top:145px;" width="8" height="5.7" viewBox="0 0 8 5.7"><path d="M1 1 L4.0 4.2 L7 1" fill="none" stroke="#505050" stroke-width="1.15"/></svg>
<div class="r" style="left:382px;top:134px;width:1px;height:27px;background:#d4d4d4;"></div>
<svg class="r" style="left:391px;top:136px;" width="22" height="22" viewBox="0 0 22 22"><path d="M4.5 9.5 L10.5 3.5 L16.5 9.5 L10.5 15.5 Z" fill="#fff" stroke="#6a6a6a" stroke-width="1.1"/><path d="M9.8 6 V2.3 Q9.8 0.8 11.3 0.8 Q12.8 0.8 12.8 2.3 V5" fill="none" stroke="#6a6a6a" stroke-width="1"/><path d="M16.2 7.2 C18.8 8 19.6 10.5 18.6 13.8 C17.6 11.6 17 10.4 15.2 9.6 Z" fill="#4a86c5"/><rect x="0" y="16.2" width="20" height="4.8" fill="#ffff00"/></svg>
<svg class="r" style="left:420px;top:145px;" width="8" height="5.7" viewBox="0 0 8 5.7"><path d="M1 1 L4.0 4.2 L7 1" fill="none" stroke="#505050" stroke-width="1.15"/></svg>
<div class="t" style="left:444.00px;top:136.33px;font-size:16.5px;line-height:16.5px;color:#444;font-weight:700;">A</div>
<div class="r" style="left:440px;top:152.2px;width:20px;height:4.8px;background:#ff0000;"></div>
<svg class="r" style="left:469px;top:145px;" width="8" height="5.7" viewBox="0 0 8 5.7"><path d="M1 1 L4.0 4.2 L7 1" fill="none" stroke="#505050" stroke-width="1.15"/></svg>
<div class="t" style="left:325.30px;top:178.70px;font-size:13px;line-height:13px;color:#333;letter-spacing:-0.538px;">Font</div>
<svg class="r" style="left:478.5px;top:181px;" width="10" height="9" viewBox="0 0 10 9"><path d="M0.5 8.5 V0.5 H9.5" fill="none" stroke="#777" stroke-width="1"/><path d="M3.5 3.5 L8.3 8.3 M8.5 4.5 V8.5 H4.5" fill="none" stroke="#777" stroke-width="1.1"/></svg>
<div class="r" style="left:492px;top:87px;width:1px;height:103px;background:#c8c8c8;"></div>
<div class="r" style="left:508px;top:99px;width:18px;height:1px;background:#6a6a6a;"></div>
<div class="r" style="left:510px;top:102px;width:14px;height:1px;background:#6a6a6a;"></div>
<div class="r" style="left:508px;top:105px;width:18px;height:1px;background:#6a6a6a;"></div>
<div class="r" style="left:538px;top:103px;width:18px;height:1px;background:#6a6a6a;"></div>
<div class="r" style="left:540px;top:106px;width:14px;height:1px;background:#6a6a6a;"></div>
<div class="r" style="left:538px;top:109px;width:18px;height:1px;background:#6a6a6a;"></div>
<div class="r" style="left:540px;top:112px;width:14px;height:1px;background:#6a6a6a;"></div>
<div class="r" style="left:563px;top:94px;width:28px;height:29px;background:#c6c6c6;border:1px solid #9b9b9b;box-sizing:border-box;"></div>
<div class="r" style="left:568px;top:107px;width:18px;height:1px;background:#6a6a6a;"></div>
<div class="r" style="left:570px;top:110px;width:14px;height:1px;background:#6a6a6a;"></div>
<div class="r" style="left:568px;top:113px;width:18px;height:1px;background:#6a6a6a;"></div>
<div class="r" style="left:570px;top:116px;width:14px;height:1px;background:#6a6a6a;"></div>
<div class="r" style="left:595px;top:95px;width:1px;height:27px;background:#d4d4d4;"></div>
<svg class="r" style="left:603px;top:97px;" width="22" height="20" viewBox="0 0 22 20"><g transform="translate(5.6,15.8) rotate(-45)"><text x="0" y="0" font-family="Liberation Sans, sans-serif" font-size="13.5" fill="#6a6a6a" stroke="#6a6a6a" stroke-width="0.35">ab</text></g><path d="M8.5 18.5 L19.5 7.5 M14.3 7.3 H19.7 V12.7" fill="none" stroke="#6a6a6a" stroke-width="1.3"/></svg>
<svg class="r" style="left:630px;top:106px;" width="8" height="5.7" viewBox="0 0 8 5.7"><path d="M1 1 L4.0 4.2 L7 1" fill="none" stroke="#505050" stroke-width="1.15"/></svg>
<div class="r" style="left:650px;top:95px;width:1px;height:27px;background:#d4d4d4;"></div>
<svg class="r" style="left:661px;top:103px;" width="16" height="11" viewBox="0 0 16 11"><path d="M0 0.5 L4.5 4.4 L0 8.3 Z" fill="#4a86c5"/><path d="M10.4 0.6 H15.5 M10.2 0.6 V10.5 M13.2 0.6 V10.5" stroke="#6a6a6a" stroke-width="1.2" fill="none"/><path d="M10.3 0.1 H9.3 A2.9 2.9 0 0 0 9.3 5.9 H10.3 Z" fill="#6a6a6a"/></svg>
<svg class="r" style="left:688px;top:106px;" width="8" height="5.7" viewBox="0 0 8 5.7"><path d="M1 1 L4.0 4.2 L7 1" fill="none" stroke="#505050" stroke-width="1.15"/></svg>
<div class="r" style="left:510px;top:142px;width:14px;height:1px;background:#6a6a6a;"></div>
<div class="r" style="left:510px;top:145px;width:11px;height:1px;background:#6a6a6a;"></div>
<div class="r" style="left:510px;top:148px;width:14px;height:1px;background:#6a6a6a;"></div>
<div class="r" style="left:510px;top:151px;width:11px;height:1px;background:#6a6a6a;"></div>
<div class="r" style="left:539px;top:142px;width:16px;height:1px;background:#6a6a6a;"></div>
<div class="r" style="left:542px;top:145px;width:10px;height:1px;background:#6a6a6a;"></div>
<div class="r" style="left:539px;top:148px;width:16px;height:1px;background:#6a6a6a;"></div>
<div class="r" style="left:542px;top:151px;width:10px;height:1px;background:#6a6a6a;"></div>
<div class="r" style="left:570px;top:142px;width:14px;height:1px;background:#6a6a6a;"></div>
<div class="r" style="left:573px;top:145px;width:11px;height:1px;background:#6a6a6a;"></div>
<div class="r" style="left:570px;top:148px;width:14px;height:1px;background:#6a6a6a;"></div>
<div class="r" style="left:573px;top:151px;width:11px;height:1px;background:#6a6a6a;"></div>
<div class="r" style="left:595px;top:134px;width:1px;height:27px;background:#d4d4d4;"></div>
<div class="r" style="left:605px;top:139px;width:18px;height:1px;background:#6a6a6a;"></div>
<div class="r" style="left:614px;top:142px;width:9px;height:1px;background:#6a6a6a;"></div>
<div class="r" style="left:614px;top:145px;width:9px;height:1px;background:#6a6a6a;"></div>
<div class="r" style="left:614px;top:148px;width:9px;height:1px;background:#6a6a6a;"></div>
<div class="r" style="left:614px;top:151px;width:9px;height:1px;background:#6a6a6a;"></div>
<div class="r" style="left:605px;top:154px;width:18px;height:1px;background:#6a6a6a;"></div>
<svg class="r" style="left:604px;top:142px;" width="10" height="10" viewBox="0 0 10 10"><path d="M5.5 1 L1.5 5 L5.5 9 M1.8 5 H9" fill="none" stroke="#4a86c5" stroke-width="2"/></svg>
<div class="r" style="left:635px;top:139px;width:18px;height:1px;background:#6a6a6a;"></div>
<div class="r" style="left:644px;top:142px;width:9px;height:1px;background:#6a6a6a;"></div>
<div class="r" style="left:644px;top:145px;width:9px;height:1px;background:#6a6a6a;"></div>
<div class="r" style="left:644px;top:148px;width:9px;height:1px;background:#6a6a6a;"></div>
<div class="r" style="left:644px;top:151px;width:9px;height:1px;background:#6a6a6a;"></div>
<div class="r" style="left:635px;top:154px;width:18px;height:1px;background:#6a6a6a;"></div>
<svg class="r" style="left:634px;top:142px;" width="10" height="10" viewBox="0 0 10 10"><path d="M4.5 1 L8.5 5 L4.5 9 M8.2 5 H1" fill="none" stroke="#4a86c5" stroke-width="2"/></svg>
<div class="r" style="left:707px;top:94px;width:1px;height:68px;background:#d4d4d4;"></div>
<svg class="r" style="left:719px;top:99px;" width="17" height="18" viewBox="0 0 17 18"><text x="0.3" y="7.6" font-family="Liberation Sans, sans-serif" font-size="11.5" fill="#555" textLength="14" lengthAdjust="spacingAndGlyphs">ab</text><text x="0.3" y="16.6" font-family="Liberation Sans, sans-serif" font-size="11.5" fill="#555">c</text><path d="M15.5 10 V12 Q15.5 14 13.5 14 H8.5 M10.8 11.6 L8.3 14 L10.8 16.4" fill="none" stroke="#4a86c5" stroke-width="1.3"/></svg>
<div class="t" style="left:741.50px;top:101.48px;font-size:14.5px;line-height:14.5px;color:#262626;letter-spacing:0.220px;">Wrap Text</div>
<svg class="r" style="left:717px;top:137px;" width="19" height="19" viewBox="0 0 19 19"><rect x="0.5" y="0.5" width="18" height="18" fill="#fff" stroke="#6a6a6a"/><path d="M0.5 4.5 H18.5 M0.5 14.5 H18.5 M9.5 0.5 V4.5 M9.5 14.5 V18.5" stroke="#6a6a6a" fill="none"/><path d="M3 9.5 H16 M5.3 7.2 L3 9.5 L5.3 11.8 M13.7 7.2 L16 9.5 L13.7 11.8" fill="none" stroke="#4a86c5" stroke-width="1.3"/></svg>
<div class="t" style="left:741.50px;top:140.48px;font-size:14.5px;line-height:14.5px;color:#262626;letter-spacing:0.242px;">Merge & Center</div>
<svg class="r" style="left:861px;top:145px;" width="8" height="5.7" viewBox="0 0 8 5.7"><path d="M1 1 L4.0 4.2 L7 1" fill="none" stroke="#505050" stroke-width="1.15"/></svg>
<div class="t" style="left:649.00px;top:178.70px;font-size:13px;line-height:13px;color:#333;letter-spacing:0.024px;">Alignment</div>
<svg class="r" style="left:871.3px;top:181px;" width="10" height="9" viewBox="0 0 10 9"><path d="M0.5 8.5 V0.5 H9.5" fill="none" stroke="#777" stroke-width="1"/><path d="M3.5 3.5 L8.3 8.3 M8.5 4.5 V8.5 H4.5" fill="none" stroke="#777" stroke-width="1.1"/></svg>
<div class="r" style="left:885px;top:87px;width:1px;height:103px;background:#c8c8c8;"></div>
<div class="r" style="left:896px;top:94px;width:174px;height:29px;background:#fff;border:1px solid #8c8c8c;box-sizing:border-box;"></div>
<div class="t" style="left:899.40px;top:101.48px;font-size:14.5px;line-height:14.5px;color:#262626;letter-spacing:-0.248px;">General</div>
<svg class="r" style="left:1058px;top:107px;" width="6" height="3" viewBox="0 0 6 3"><path d="M0 0 H6 L3.0 3 Z" fill="#555"/></svg>
<div class="t" style="left:904.60px;top:136.77px;font-size:20px;line-height:20px;color:#555;transform:scaleX(0.87);transform-origin:left;">$</div>
<svg class="r" style="left:929px;top:145px;" width="8" height="5.7" viewBox="0 0 8 5.7"><path d="M1 1 L4.0 4.2 L7 1" fill="none" stroke="#505050" stroke-width="1.15"/></svg>
<div class="t" style="left:950.60px;top:138.36px;font-size:18px;line-height:18px;color:#555;">%</div>
<svg class="r" style="left:985px;top:142.5px;" width="7" height="9" viewBox="0 0 7 9"><circle cx="3.5" cy="2.9" r="2.7" fill="#555"/><path d="M6.2 2.9 C6.4 5.8 4.4 7.7 1 8.6 C2.9 7.2 3.6 6 3.2 4.6 Z" fill="#555"/></svg>
<div class="r" style="left:1007px;top:134px;width:1px;height:27px;background:#d4d4d4;"></div>
<svg class="r" style="left:1017px;top:136px;" width="18" height="21" viewBox="0 0 18 21"><path d="M4.3 4 L1.4 6.9 L4.3 9.8 M1.7 6.9 H8.5" fill="none" stroke="#3c78be" stroke-width="2"/><text x="7.9" y="10.3" font-family="Liberation Sans, sans-serif" font-size="10" fill="#444">.0</text><text x="2.1" y="19.1" font-family="Liberation Sans, sans-serif" font-size="10" fill="#444">.00</text></svg>
<svg class="r" style="left:1047px;top:136px;" width="18" height="21" viewBox="0 0 18 21"><text x="3.3" y="10.3" font-family="Liberation Sans, sans-serif" font-size="10" fill="#444">.00</text><path d="M4.9 13.1 L7.8 16 L4.9 18.9 M7.5 16 H0.9" fill="none" stroke="#3c78be" stroke-width="2"/><text x="8.1" y="19.1" font-family="Liberation Sans, sans-serif" font-size="10" fill="#444">.0</text></svg>
<div class="t" style="left:948.50px;top:178.70px;font-size:13px;line-height:13px;color:#333;letter-spacing:0.253px;">Number</div>
<svg class="r" style="left:1065px;top:181px;" width="10" height="9" viewBox="0 0 10 9"><path d="M0.5 8.5 V0.5 H9.5" fill="none" stroke="#777" stroke-width="1"/><path d="M3.5 3.5 L8.3 8.3 M8.5 4.5 V8.5 H4.5" fill="none" stroke="#777" stroke-width="1.1"/></svg>
<div class="r" style="left:1079px;top:87px;width:1px;height:103px;background:#c8c8c8;"></div>
<svg class="r" style="left:1118px;top:93px;" width="40" height="36" viewBox="0 0 40 36"><rect x="1" y="1" width="34" height="27.6" fill="#fff"/><rect x="12" y="1.5" width="7" height="6.5" fill="#d9613c"/><rect x="12" y="8.8" width="10.7" height="6.3" fill="#4a86c5"/><rect x="12" y="15.8" width="9" height="6.2" fill="#d9613c"/><rect x="12" y="22.8" width="5" height="5.5" fill="#4a86c5"/><path d="M1 1 H35 V28.6 H1 Z M11.5 1 V28.6 M24.4 1 V28.6 M1 8.4 H35 M1 15.3 H35 M1 22.3 H35" fill="none" stroke="#8a8a8a" stroke-width="1"/><rect x="19.5" y="20.5" width="18.5" height="14" fill="#fff" stroke="#8a8a8a" stroke-width="1"/><path d="M24.5 25.7 H33 M24.5 29.3 H33 M26.3 32.3 L31.2 22.7" stroke="#444" stroke-width="1.1" fill="none"/></svg>
<div class="t" style="left:1097.00px;top:133.73px;font-size:14.5px;line-height:14.5px;color:#262626;letter-spacing:0.395px;">Conditional</div>
<div class="t" style="left:1092.40px;top:153.73px;font-size:14.5px;line-height:14.5px;color:#262626;letter-spacing:0.333px;">Formatting</div>
<svg class="r" style="left:1170px;top:157px;" width="8" height="5.7" viewBox="0 0 8 5.7"><path d="M1 1 L4.0 4.2 L7 1" fill="none" stroke="#505050" stroke-width="1.15"/></svg>
<svg class="r" style="left:1199px;top:92px;" width="40" height="37" viewBox="0 0 40 37"><rect x="1" y="1.2" width="33" height="28.4" fill="#fff"/><rect x="9.3" y="8.4" width="24.7" height="21.2" fill="#bdd0e9"/><path d="M1 1.2 H34 V29.6 H1 Z M9.3 1.2 V29.6 M17.9 1.2 V29.6 M25.7 1.2 V29.6 M1 8.4 H34 M1 15.3 H34 M1 22.4 H34" fill="none" stroke="#8a8a8a" stroke-width="1"/><path d="M38 8 L39 20 L26 36 L10 36 L22 24 Z" fill="#f3f3f3" opacity="0"/><g transform="translate(38.2,8.8)"><path d="M0 0 L0.3 9 L-6.5 15.2 L-10.6 11 Z" fill="#7f7f7f" stroke="#f3f3f3" stroke-width="2" paint-order="stroke"/><path d="M-7.3 15.8 L-11.3 11.7 L-13.9 14.2 L-9.8 18.3 Z" fill="#7f7f7f" stroke="#f3f3f3" stroke-width="1.6" paint-order="stroke"/><path d="M-10.6 19 L-14.6 15 C-19.5 15.5 -22 21 -27.5 26.7 L-18 26.7 C-13 26.5 -9.5 23 -10.6 19 Z" fill="#4a86c5" stroke="#f3f3f3" stroke-width="2" paint-order="stroke"/><path d="M-11.9 19.2 C-11.5 21.5 -12.6 23.3 -14.3 24.3 C-14.9 22 -16.3 20.5 -18.3 20 C-16.8 17.8 -14.7 16.7 -13.9 16.9 Z" fill="#fff"/></g></svg>
<div class="t" style="left:1184.70px;top:133.73px;font-size:14.5px;line-height:14.5px;color:#262626;letter-spacing:-0.183px;">Format as</div>
<div class="t" style="left:1193.00px;top:153.73px;font-size:14.5px;line-height:14.5px;color:#262626;letter-spacing:-0.166px;">Table</div>
<svg class="r" style="left:1232px;top:157px;" width="8" height="5.7" viewBox="0 0 8 5.7"><path d="M1 1 L4.0 4.2 L7 1" fill="none" stroke="#505050" stroke-width="1.15"/></svg>
<svg class="r" style="left:1261px;top:89px;" width="42" height="40" viewBox="0 0 42 40"><rect x="1" y="1.3" width="33.7" height="28.3" fill="#fff"/><rect x="8.4" y="8.5" width="18.3" height="12.9" fill="#bdd0e9"/><path d="M1 1.3 H34.7 V29.6 H1 Z M8.4 1.3 V29.6 M26.7 1.3 V29.6 M1 8.5 H34.7 M1 21.4 H34.7" fill="none" stroke="#8a8a8a" stroke-width="1"/><g transform="translate(39.3,11.8)"><path d="M0 0 L0.3 9 L-6.5 15.2 L-10.6 11 Z" fill="#7f7f7f" stroke="#f3f3f3" stroke-width="2" paint-order="stroke"/><path d="M-7.3 15.8 L-11.3 11.7 L-13.9 14.2 L-9.8 18.3 Z" fill="#7f7f7f" stroke="#f3f3f3" stroke-width="1.6" paint-order="stroke"/><path d="M-10.6 19 L-14.6 15 C-19.5 15.5 -22 21 -27.5 26.7 L-18 26.7 C-13 26.5 -9.5 23 -10.6 19 Z" fill="#4a86c5" stroke="#f3f3f3" stroke-width="2" paint-order="stroke"/><path d="M-11.9 19.2 C-11.5 21.5 -12.6 23.3 -14.3 24.3 C-14.9 22 -16.3 20.5 -18.3 20 C-16.8 17.8 -14.7 16.7 -13.9 16.9 Z" fill="#fff"/></g></svg>
<div class="t" style="left:1268.00px;top:133.73px;font-size:14.5px;line-height:14.5px;color:#262626;letter-spacing:-0.160px;">Cell</div>
<div class="t" style="left:1254.70px;top:153.73px;font-size:14.5px;line-height:14.5px;color:#262626;letter-spacing:-0.437px;">Styles</div>
<svg class="r" style="left:1297px;top:157px;" width="8" height="5.7" viewBox="0 0 8 5.7"><path d="M1 1 L4.0 4.2 L7 1" fill="none" stroke="#505050" stroke-width="1.15"/></svg>
<div class="t" style="left:1182.30px;top:178.70px;font-size:13px;line-height:13px;color:#333;letter-spacing:-0.580px;">Styles</div>
<div class="r" style="left:1318px;top:87px;width:1px;height:103px;background:#c8c8c8;"></div>
<svg class="r" style="left:1335px;top:90px;" width="38" height="37" viewBox="0 0 38 37"><path d="M4.5 1.5 H23 V7.7 H4.5 Z M13.7 1.5 V7.7" fill="#fff" stroke="#8a8a8a" stroke-width="1"/><path d="M18.5 12 H37 V18.6 H18.5 Z M27.7 12 V18.6" fill="#bdd0e9" stroke="#8a8a8a" stroke-width="1"/><path d="M4.5 23.5 H23 V35.7 H4.5 Z M13.7 23.5 V35.7 M4.5 29.6 H23" fill="#fff" stroke="#8a8a8a" stroke-width="1"/><path d="M8 10.5 L2.5 15.5 L8 20.5 M3 15.5 H16" fill="none" stroke="#4a86c5" stroke-width="2.6"/></svg>
<div class="t" style="left:1337.60px;top:133.73px;font-size:14.5px;line-height:14.5px;color:#262626;letter-spacing:-0.213px;">Insert</div>
<svg class="r" style="left:1351px;top:157px;" width="8" height="5.7" viewBox="0 0 8 5.7"><path d="M1 1 L4.0 4.2 L7 1" fill="none" stroke="#505050" stroke-width="1.15"/></svg>
<svg class="r" style="left:1390px;top:90px;" width="38" height="37" viewBox="0 0 38 37"><path d="M1.5 1.5 H20 V7.7 H1.5 Z M10.7 1.5 V7.7" fill="#fff" stroke="#8a8a8a" stroke-width="1"/><path d="M8.5 11.7 H20 L23.5 14.8 L20 18 H8.5 Z M17.5 11.7 V18" fill="#bdd0e9" stroke="#8a8a8a" stroke-width="1"/><path d="M1.5 21.5 H20 V33.8 H1.5 Z M10.7 21.5 V33.8 M1.5 27.6 H20" fill="#fff" stroke="#8a8a8a" stroke-width="1"/><path d="M19.5 8 C24 11 30 17 35 22 M35.5 8 C29 12 23 17 19 22.5" fill="none" stroke="#d9613c" stroke-width="2.2" stroke-linecap="round"/></svg>
<div class="t" style="left:1386.00px;top:133.73px;font-size:14.5px;line-height:14.5px;color:#262626;letter-spacing:0.117px;">Delete</div>
<svg class="r" style="left:1403px;top:157px;" width="8" height="5.7" viewBox="0 0 8 5.7"><path d="M1 1 L4.0 4.2 L7 1" fill="none" stroke="#505050" stroke-width="1.15"/></svg>
<svg class="r" style="left:1441px;top:89px;" width="37" height="39" viewBox="0 0 37 39"><path d="M1.5 1 V7 M28.5 1 V7" stroke="#4a86c5" stroke-width="1.2"/><path d="M4.5 4 H25.5 M7.5 1.2 L4.5 4 L7.5 6.8 M22.5 1.2 L25.5 4 L22.5 6.8" fill="none" stroke="#4a86c5" stroke-width="1.4"/><rect x="1.5" y="9.5" width="33.5" height="24" fill="#fff"/><rect x="10" y="16" width="9" height="11" fill="#4a86c5"/><path d="M1.5 9.5 H35 V33.5 H1.5 Z M9.5 9.5 V33.5 M19.6 9.5 V33.5 M28.6 9.5 V33.5 M1.5 15.5 H35 M1.5 27.6 H35" fill="none" stroke="#b4b4b4" stroke-width="1"/><path d="M1.5 9.5 H35 V33.5 H1.5 Z" fill="none" stroke="#8a8a8a" stroke-width="1"/><path d="M1.5 33.5 V37.5 H10 L11.5 35.5 L12.5 37.5 H21 L23.5 33.5" fill="#fff" stroke="#8a8a8a" stroke-width="1"/></svg>
<div class="t" style="left:1435.30px;top:133.73px;font-size:14.5px;line-height:14.5px;color:#262626;letter-spacing:0.156px;">Format</div>
<svg class="r" style="left:1455px;top:157px;" width="8" height="5.7" viewBox="0 0 8 5.7"><path d="M1 1 L4.0 4.2 L7 1" fill="none" stroke="#505050" stroke-width="1.15"/></svg>
<div class="t" style="left:1392.50px;top:178.70px;font-size:13px;line-height:13px;color:#333;letter-spacing:-0.649px;">Cells</div>
<div class="r" style="left:1494px;top:87px;width:1px;height:103px;background:#c8c8c8;"></div>
<svg class="r" style="left:1510px;top:90px;" width="17" height="17" viewBox="0 0 17 17"><path d="M14.5 3.5 V1 H1.8 L8.3 8.2 L1.8 15.4 H14.8 V13" fill="none" stroke="#444" stroke-width="1.9" stroke-linejoin="miter"/></svg>
<div class="t" style="left:1533.60px;top:91.73px;font-size:14.5px;line-height:14.5px;color:#262626;letter-spacing:0.009px;">AutoSum</div>
<svg class="r" style="left:1608px;top:96px;" width="8" height="5.7" viewBox="0 0 8 5.7"><path d="M1 1 L4.0 4.2 L7 1" fill="none" stroke="#505050" stroke-width="1.15"/></svg>
<svg class="r" style="left:1510px;top:118px;" width="18" height="18" viewBox="0 0 18 18"><rect x="0.5" y="0.5" width="16" height="17" fill="#fff" stroke="#8a8a8a"/><rect x="0" y="0" width="17" height="2.3" fill="#6a6a6a"/><path d="M8.5 5 V14 M4.8 10.6 L8.5 14.3 L12.2 10.6" fill="none" stroke="#4a86c5" stroke-width="1.8"/></svg>
<div class="t" style="left:1533.60px;top:120.73px;font-size:14.5px;line-height:14.5px;color:#262626;letter-spacing:-0.374px;">Fill</div>
<svg class="r" style="left:1557px;top:124px;" width="8" height="5.7" viewBox="0 0 8 5.7"><path d="M1 1 L4.0 4.2 L7 1" fill="none" stroke="#505050" stroke-width="1.15"/></svg>
<svg class="r" style="left:1510px;top:147px;" width="18" height="18" viewBox="0 0 18 18"><path d="M9.5 1.5 L16.5 7 L8.5 15 L1.5 9.5 Z" fill="#e8879a"/><path d="M1.5 9.5 L4.3 7 L11.2 12.4 L8.5 15 Z" fill="#f6d0d6" opacity="0.0"/><path d="M3.6 7.6 L10.8 13.1" stroke="#f3f3f3" stroke-width="1.1"/><path d="M1.3 10 L8 15.6" stroke="#e8879a" stroke-width="2"/></svg>
<div class="t" style="left:1533.60px;top:149.73px;font-size:14.5px;line-height:14.5px;color:#262626;letter-spacing:-0.413px;">Clear</div>
<svg class="r" style="left:1572px;top:153px;" width="8" height="5.7" viewBox="0 0 8 5.7"><path d="M1 1 L4.0 4.2 L7 1" fill="none" stroke="#505050" stroke-width="1.15"/></svg>
<div class="t" style="left:1631.30px;top:89.42px;font-size:19px;line-height:19px;color:#4a86c5;-webkit-text-stroke:0.5px #4a86c5;">A</div>
<div class="t" style="left:1631.80px;top:106.42px;font-size:19px;line-height:19px;color:#9a57b8;-webkit-text-stroke:0.5px #9a57b8;">Z</div>
<svg class="r" style="left:1647px;top:98px;" width="20" height="19" viewBox="0 0 20 19"><path d="M1 1 H19 L12 9 V17 L8.5 17 V9 Z" fill="#7f7f7f"/><path d="M9.7 10 V16" stroke="#f3f3f3" stroke-width="1"/></svg>
<div class="t" style="left:1627.50px;top:133.53px;font-size:14.5px;line-height:14.5px;color:#262626;">Sort &amp;</div>
<div class="t" style="left:1625.50px;top:153.23px;font-size:14.5px;line-height:14.5px;color:#262626;letter-spacing:0.016px;">Filter</div>
<svg class="r" style="left:1663px;top:157px;" width="8" height="5.7" viewBox="0 0 8 5.7"><path d="M1 1 L4.0 4.2 L7 1" fill="none" stroke="#505050" stroke-width="1.15"/></svg>
<svg class="r" style="left:1686px;top:90px;" width="38" height="36" viewBox="0 0 38 36"><circle cx="22.5" cy="13.3" r="10.8" fill="#fff" stroke="#4a86c5" stroke-width="2.2"/><path d="M14.5 22 L3.5 33" stroke="#4a86c5" stroke-width="4" stroke-linecap="round"/></svg>
<div class="t" style="left:1682.50px;top:133.53px;font-size:14.5px;line-height:14.5px;color:#262626;">Find &amp;</div>
<div class="t" style="left:1677.50px;top:153.23px;font-size:14.5px;line-height:14.5px;color:#262626;letter-spacing:-0.220px;">Select</div>
<svg class="r" style="left:1722px;top:157px;" width="8" height="5.7" viewBox="0 0 8 5.7"><path d="M1 1 L4.0 4.2 L7 1" fill="none" stroke="#505050" stroke-width="1.15"/></svg>
<div class="t" style="left:1598.50px;top:178.70px;font-size:13px;line-height:13px;color:#333;letter-spacing:-0.142px;">Editing</div>
<div class="r" style="left:1743px;top:87px;width:1px;height:103px;background:#c8c8c8;"></div>
<svg class="r" style="left:1896px;top:183px;" width="15" height="9" viewBox="0 0 15 9"><path d="M1 7.5 L7.3 1.3 L13.6 7.5" fill="none" stroke="#444" stroke-width="1.3"/></svg>
<div class="r" style="left:20px;top:203px;width:332px;height:70px;background:#fff;box-shadow:1px 1px 3px rgba(0,0,0,0.22);border:1px solid #d2d2d2;box-sizing:border-box;"></div>
<div class="r" style="left:25px;top:208px;width:78px;height:30px;background:#fff;border:1px solid #c6c6c6;box-sizing:border-box;"></div>
<div class="t" style="left:28.50px;top:214.13px;font-size:14.5px;line-height:14.5px;color:#262626;letter-spacing:0.151px;">Calibri</div>
<svg class="r" style="left:91px;top:222px;" width="6.4" height="3.2" viewBox="0 0 6.4 3.2"><path d="M0 0 H6.4 L3.2 3.2 Z" fill="#555"/></svg>
<div class="r" style="left:103px;top:208px;width:57px;height:30px;background:#fff;border:1px solid #c6c6c6;box-sizing:border-box;"></div>
<div class="t" style="left:106.60px;top:214.13px;font-size:14.5px;line-height:14.5px;color:#262626;">11</div>
<svg class="r" style="left:147.5px;top:222px;" width="6.4" height="3.2" viewBox="0 0 6.4 3.2"><path d="M0 0 H6.4 L3.2 3.2 Z" fill="#555"/></svg>
<div class="t" style="left:169.00px;top:215.38px;font-size:15.5px;line-height:15.5px;color:#6a6a6a;-webkit-text-stroke:0.4px #6a6a6a;">A</div>
<svg class="r" style="left:177px;top:214.4px;" width="6" height="3" viewBox="0 0 6 3"><path d="M0 3 L3 0 L6 3 Z" fill="#4a86c5"/></svg>
<div class="t" style="left:196.20px;top:217.85px;font-size:14px;line-height:14px;color:#6a6a6a;-webkit-text-stroke:0.4px #6a6a6a;">A</div>
<svg class="r" style="left:204px;top:215px;" width="6" height="3" viewBox="0 0 6 3"><path d="M0 0 H6 L3 3 Z" fill="#4a86c5"/></svg>
<div class="t" style="left:224.80px;top:212.65px;font-size:20.5px;line-height:20.5px;color:#555;transform:scaleX(0.86);transform-origin:left;">$</div>
<svg class="r" style="left:249px;top:221px;" width="8" height="5.7" viewBox="0 0 8 5.7"><path d="M1 1 L4.0 4.2 L7 1" fill="none" stroke="#505050" stroke-width="1.15"/></svg>
<div class="t" style="left:269.00px;top:214.76px;font-size:18px;line-height:18px;color:#555;">%</div>
<svg class="r" style="left:301px;top:218.3px;" width="7" height="9" viewBox="0 0 7 9"><circle cx="3.5" cy="2.9" r="2.7" fill="#555"/><path d="M6.2 2.9 C6.4 5.8 4.4 7.7 1 8.6 C2.9 7.2 3.6 6 3.2 4.6 Z" fill="#555"/></svg>
<svg class="r" style="left:323px;top:213px;" width="19" height="19" viewBox="0 0 19 19"><rect x="0.5" y="0.5" width="18" height="18" fill="#fff" stroke="#6a6a6a"/><path d="M0.5 4.5 H18.5 M0.5 14.5 H18.5 M9.5 0.5 V4.5 M9.5 14.5 V18.5" stroke="#6a6a6a" fill="none"/><path d="M3 9.5 H16 M5.3 7.2 L3 9.5 L5.3 11.8 M13.7 7.2 L16 9.5 L13.7 11.8" fill="none" stroke="#4a86c5" stroke-width="1.3"/></svg>
<div class="t" style="left:33.70px;top:245.76px;font-size:16px;line-height:16px;color:#444;font-weight:700;transform:scaleX(0.88);transform-origin:left;">B</div>
<div class="t" style="left:63.20px;top:244.06px;font-size:18px;line-height:18px;color:#444;font-weight:700;font-style:italic;font-family:'Liberation Serif',serif;">I</div>
<div class="r" style="left:87px;top:248.5px;width:16px;height:1px;background:#6a6a6a;"></div>
<div class="r" style="left:90px;top:251.35px;width:10px;height:1px;background:#6a6a6a;"></div>
<div class="r" style="left:87px;top:254.2px;width:16px;height:1px;background:#6a6a6a;"></div>
<div class="r" style="left:90px;top:257.05px;width:10px;height:1px;background:#6a6a6a;"></div>
<svg class="r" style="left:112px;top:242px;" width="22" height="22" viewBox="0 0 22 22"><path d="M4.5 9.5 L10.5 3.5 L16.5 9.5 L10.5 15.5 Z" fill="#fff" stroke="#6a6a6a" stroke-width="1.1"/><path d="M9.8 6 V2.3 Q9.8 0.8 11.3 0.8 Q12.8 0.8 12.8 2.3 V5" fill="none" stroke="#6a6a6a" stroke-width="1"/><path d="M16.2 7.2 C18.8 8 19.6 10.5 18.6 13.8 C17.6 11.6 17 10.4 15.2 9.6 Z" fill="#4a86c5"/><rect x="1" y="16.2" width="20" height="4.6" fill="#ffff00"/></svg>
<svg class="r" style="left:142px;top:251px;" width="8" height="5.7" viewBox="0 0 8 5.7"><path d="M1 1 L4.0 4.2 L7 1" fill="none" stroke="#505050" stroke-width="1.15"/></svg>
<div class="t" style="left:163.60px;top:242.23px;font-size:16.5px;line-height:16.5px;color:#444;font-weight:700;">A</div>
<div class="r" style="left:160px;top:258px;width:20px;height:4.8px;background:#ff0000;"></div>
<svg class="r" style="left:189px;top:251px;" width="8" height="5.7" viewBox="0 0 8 5.7"><path d="M1 1 L4.0 4.2 L7 1" fill="none" stroke="#505050" stroke-width="1.15"/></svg>
<svg class="r" style="left:207px;top:243px;" width="19" height="19" viewBox="0 0 19 19"><g shape-rendering="crispEdges"><path d="M0.5 0.5 H18 M0.5 8.5 H18 M0.5 0.5 V17 M9.5 0.5 V17 M17.5 0.5 V17" stroke="#7a7a7a" stroke-width="1" stroke-dasharray="1 1" fill="none"/><path d="M0 17.5 H18" stroke="#555" stroke-width="1"/></g></svg>
<svg class="r" style="left:236px;top:251px;" width="8" height="5.7" viewBox="0 0 8 5.7"><path d="M1 1 L4.0 4.2 L7 1" fill="none" stroke="#505050" stroke-width="1.15"/></svg>
<svg class="r" style="left:255px;top:242.2px;" width="18" height="21" viewBox="0 0 18 21"><path d="M4.3 4 L1.4 6.9 L4.3 9.8 M1.7 6.9 H8.5" fill="none" stroke="#3c78be" stroke-width="2"/><text x="7.9" y="10.3" font-family="Liberation Sans, sans-serif" font-size="10" fill="#444">.0</text><text x="2.1" y="19.1" font-family="Liberation Sans, sans-serif" font-size="10" fill="#444">.00</text></svg>
<svg class="r" style="left:283px;top:242.2px;" width="18" height="21" viewBox="0 0 18 21"><text x="3.3" y="10.3" font-family="Liberation Sans, sans-serif" font-size="10" fill="#444">.00</text><path d="M4.9 13.1 L7.8 16 L4.9 18.9 M7.5 16 H0.9" fill="none" stroke="#3c78be" stroke-width="2"/><text x="8.1" y="19.1" font-family="Liberation Sans, sans-serif" font-size="10" fill="#444">.0</text></svg>
<svg class="r" style="left:311px;top:245px;" width="19" height="16" viewBox="0 0 19 16"><path d="M1 9.5 L8.5 5.5 L12 10.5 L6 15.5 Z" fill="#ecc27d"/><path d="M8.2 4.6 L11.8 1.8 L15.3 6.5 L11.9 9.4 Z" fill="#6a6a6a"/><path d="M13.2 1.6 L16.2 0 L18.2 2.6 L15.6 4.6 Z" fill="#6a6a6a"/><path d="M8.3 5.3 L12.2 10.1" stroke="#fff" stroke-width="0.9"/><path d="M12.3 2.3 L15 5.9" stroke="#fff" stroke-width="0.7"/></svg>
<div class="r" style="left:20px;top:292px;width:168px;height:377px;background:#fff;box-shadow:1px 1px 3px rgba(0,0,0,0.22);border:1px solid #d2d2d2;box-sizing:border-box;"></div>
<svg class="r" style="left:26px;top:299px;" width="18" height="18" viewBox="0 0 18 18"><path d="M3.6 0.5 L11.4 12.3 M14.4 0.5 L6.6 12.3" stroke="#6a6a6a" stroke-width="1.8" fill="none"/><circle cx="4.3" cy="14.6" r="2.6" fill="none" stroke="#4a86c5" stroke-width="1.3"/><circle cx="13.7" cy="14.6" r="2.6" fill="none" stroke="#4a86c5" stroke-width="1.3"/></svg>
<div class="t" style="left:61.50px;top:302.33px;font-size:14.5px;line-height:14.5px;color:#565656;letter-spacing:-0.632px;">Cu<u>t</u></div>
<svg class="r" style="left:27px;top:329px;" width="18" height="18" viewBox="0 0 18 18"><path d="M0.5 0.5 H6.5 L9.5 3.5 V6 M6.5 0.5 V3.5 H9.5 M0.5 0.5 V12.5 H6.5" fill="none" stroke="#6a6a6a" stroke-width="1"/><path d="M2.5 4.5 H6 M2.5 7 H5.5 M2.5 9.5 H5.5" stroke="#4a86c5" stroke-width="1"/><path d="M7.5 5.5 H13.5 L16.5 8.5 V17.5 H7.5 Z" fill="#fff" stroke="#6a6a6a" stroke-width="1"/><path d="M13.5 5.5 V8.5 H16.5" fill="none" stroke="#6a6a6a" stroke-width="1"/><path d="M9.5 10.5 H14.5 M9.5 12.8 H14.5 M9.5 15.1 H14.5" stroke="#4a86c5" stroke-width="1"/></svg>
<div class="t" style="left:61.50px;top:332.33px;font-size:14.5px;line-height:14.5px;color:#565656;letter-spacing:-0.217px;"><u>C</u>opy</div>
<div class="r" style="left:51px;top:354px;width:135px;height:29px;background:#e8e8e8;"></div>
<svg class="r" style="left:26.8px;top:356.5px;" width="21.0" height="22.0" viewBox="0 0 21 22"><rect x="0" y="3.4" width="16" height="16.9" rx="0.8" fill="#ecc27d"/><path d="M3.2 5.3 V3.6 Q3.2 2.8 4 2.8 H6.3 Q6.6 0.5 8.2 0.5 Q9.8 0.5 10.1 2.8 H12.4 Q13.2 2.8 13.2 3.6 V5.3 Z" fill="#6a6a6a"/><rect x="7.4" y="1.8" width="1.6" height="1.4" fill="#fff"/><path d="M10.5 9.3 H15.9 L19 12.4 V20.5 H10.5 Z" fill="#fff" stroke="#6a6a6a" stroke-width="1"/><path d="M15.9 9.3 V12.4 H19" fill="none" stroke="#6a6a6a" stroke-width="1"/></svg>
<div class="t" style="left:62.60px;top:361.73px;font-size:14.5px;line-height:14.5px;color:#5a5a5a;letter-spacing:-0.186px;font-weight:700;">Paste Options:</div>
<svg class="r" style="left:61.2px;top:391px;" width="23.0" height="24.1" viewBox="0 0 21 22"><rect x="0" y="3.4" width="16" height="16.9" rx="0.8" fill="#ecc27d"/><path d="M3.2 5.3 V3.6 Q3.2 2.8 4 2.8 H6.3 Q6.6 0.5 8.2 0.5 Q9.8 0.5 10.1 2.8 H12.4 Q13.2 2.8 13.2 3.6 V5.3 Z" fill="#6a6a6a"/><rect x="7.4" y="1.8" width="1.6" height="1.4" fill="#fff"/><path d="M10.5 9.3 H15.9 L19 12.4 V20.5 H10.5 Z" fill="#fff" stroke="#6a6a6a" stroke-width="1"/><path d="M15.9 9.3 V12.4 H19" fill="none" stroke="#6a6a6a" stroke-width="1"/></svg>
<div class="t" style="left:61.50px;top:429.03px;font-size:14.5px;line-height:14.5px;color:#565656;letter-spacing:-0.383px;">Paste <u>S</u>pecial...</div>
<div class="r" style="left:61px;top:451px;width:125px;height:1px;background:#e1e1e1;"></div>
<div class="t" style="left:61.50px;top:462.73px;font-size:14.5px;line-height:14.5px;color:#565656;letter-spacing:-0.253px;"><u>I</u>nsert</div>
<div class="r" style="left:22px;top:484px;width:164px;height:30px;background:#c6c6c6;"></div>
<div class="t" style="left:61.50px;top:492.73px;font-size:14.5px;line-height:14.5px;color:#3c3c3c;letter-spacing:0.217px;"><u>D</u>elete</div>
<div class="t" style="left:61.50px;top:522.73px;font-size:14.5px;line-height:14.5px;color:#565656;letter-spacing:-0.093px;">Clear Co<u>n</u>tents</div>
<div class="r" style="left:61px;top:544px;width:125px;height:1px;background:#e1e1e1;"></div>
<svg class="r" style="left:28px;top:552px;" width="16" height="18" viewBox="0 0 16 18"><rect x="0.5" y="0.5" width="15" height="17" fill="#fff" stroke="#6a6a6a"/><rect x="0" y="0" width="16" height="3" fill="#3f7bbf"/><path d="M7.2 6.5 H14 M7.2 10.5 H14 M7.2 14.5 H14" stroke="#6a6a6a" stroke-width="1"/><circle cx="4.4" cy="6.5" r="1.1" fill="#8a8a8a"/><circle cx="4.4" cy="10.5" r="1" fill="none" stroke="#7a7a7a" stroke-width="0.7"/><circle cx="4.4" cy="14.5" r="1" fill="none" stroke="#7a7a7a" stroke-width="0.7"/></svg>
<div class="t" style="left:61.50px;top:556.23px;font-size:14.5px;line-height:14.5px;color:#565656;letter-spacing:-0.269px;"><u>F</u>ormat Cells...</div>
<div class="t" style="left:61.50px;top:586.23px;font-size:14.5px;line-height:14.5px;color:#565656;letter-spacing:-0.070px;"><u>R</u>ow Height...</div>
<div class="t" style="left:61.50px;top:616.23px;font-size:14.5px;line-height:14.5px;color:#565656;letter-spacing:0.559px;"><u>H</u>ide</div>
<div class="t" style="left:61.50px;top:646.23px;font-size:14.5px;line-height:14.5px;color:#565656;letter-spacing:0.030px;"><u>U</u>nhide</div>
<svg class="r" style="left:180px;top:458px;" width="140" height="82" viewBox="0 0 140 82"><path d="M9 40.9 L68.4 9.8 L68.4 25.5 L128.5 25.5 L128.5 56.3 L68.4 56.3 L68.4 72.2 Z" fill="#ed1c24" stroke="#000" stroke-width="5" stroke-linejoin="round"/></svg>
</body></html>
